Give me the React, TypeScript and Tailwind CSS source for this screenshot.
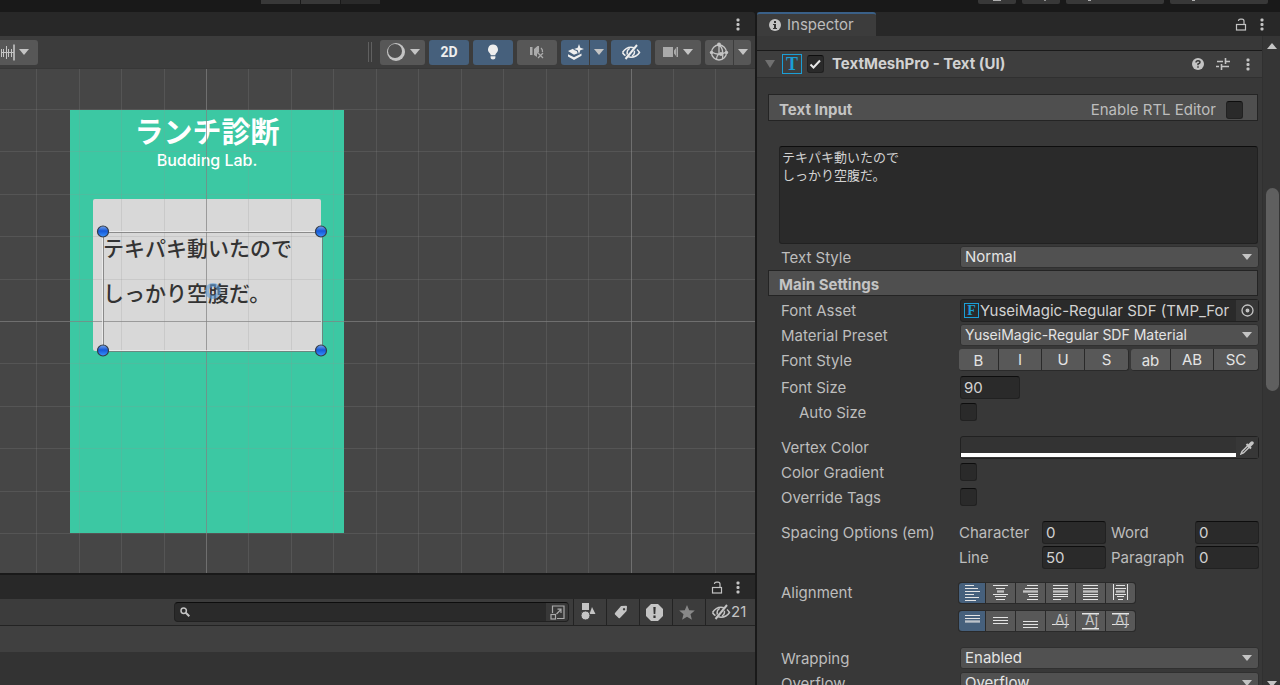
import React from 'react';
import clsx from 'clsx';

const Caret = ({ className = '' }: { className?: string }) => (
  <svg width="10" height="6" viewBox="0 0 10 6" className={clsx('shrink-0 fill-[#c4c4c4]', className)}>
    <path d="M0 0h10L5 6z" />
  </svg>
);

const Kebab = () => (
  <svg width="4" height="13" viewBox="0 0 4 13" fill="#c4c4c4">
    <rect x="0.5" y="0.5" width="3" height="3" rx="1" />
    <rect x="0.5" y="5" width="3" height="3" rx="1" />
    <rect x="0.5" y="9.5" width="3" height="3" rx="1" />
  </svg>
);

const Lock = () => (
  <svg width="12" height="13" viewBox="0 0 12 13" fill="none" stroke="#c4c4c4" strokeWidth="1.2">
    <rect x="1.5" y="6.5" width="9" height="5.5" />
    <path d="M9 6V3.2Q9 1.2 7 1.2H5.5Q3.6 1.2 3.4 3" />
  </svg>
);

const EyeOff = ({ color = '#c4c4c4' }: { color?: string }) => (
  <svg width="20" height="18" viewBox="0 0 20 18" fill="none" stroke={color} strokeWidth="1.5">
    <path d="M1.5 9.5C4 5.5 7 4.2 10 4.2c1 0 2 .2 2.8.5M16 6.5c1 .8 1.8 1.8 2.5 3-2.3 3.5-5.2 4.7-8.5 4.7-1 0-1.8-.1-2.7-.4M4.5 12.7c-1.200-.8-2.200-1.900-3-3.200" />
    <path d="M6.3 11.5C5.800 9 6.600 6.500 8.700 5.400M13.300 7.700c.5 2-.3 4-2.300 5.200" />
    <path d="M4.500 16L16 2" strokeWidth="2" />
  </svg>
);

const ShadingIcon = () => (
  <svg width="20" height="20" viewBox="0 0 20 20">
    <circle cx="10" cy="10" r="9" fill="#c4c4c4" />
    <circle cx="9" cy="9" r="7" fill="#505050" />
  </svg>
);

const BulbIcon = () => (
  <svg width="12" height="17" viewBox="0 0 12 17" fill="#eeeeee">
    <path d="M6 .5a5 5 0 0 0-3.200 8.800c.6.5.9 1.200.9 2h4.600c0-.8.3-1.500.9-2A5 5 0 0 0 6 .5z" />
    <path d="M3.600 12.300h4.800v1.200c0 1.300-1 2-2.400 2s-2.400-.7-2.400-2z" />
  </svg>
);

const MuteIcon = () => (
  <svg width="16" height="14" viewBox="0 0 16 14" fill="#aaaaaa">
    <path d="M1 2h2.500v8H1zM5 4l3.500-3H10v6l-2 2v3L5 10z" />
    <path d="M9 8l5 5M14 8l-5 5M12 3q1.800 1.300 1.500 4" fill="none" stroke="#aaaaaa" strokeWidth="1.3" />
  </svg>
);

const FxIcon = () => (
  <svg width="17" height="17" viewBox="0 0 17 17" fill="#eeeeee">
    <path d="M12 0l1.300 3.700L17 5l-3.700 1.300L12 10l-1.300-3.700L7 5l3.700-1.300z" />
    <path d="M1 7l5-2.300 1 1.200 2.700 1.200 1 2.200L7 10.800z" />
    <path d="M1 10.200l6 3 7.500-3.700v2.200L7 16l-6-3.500z" />
  </svg>
);

const CameraIcon = () => (
  <svg width="16" height="12" viewBox="0 0 16 12" fill="#aaaaaa">
    <path d="M0 1h10v10H0zM11 4.500L13 2v8l-2-2.500zM13.500 1H15v10h-1.500z" />
  </svg>
);

const GizmoIcon = () => (
  <svg width="20" height="20" viewBox="0 0 20 20" fill="none" stroke="#c4c4c4" strokeWidth="1.3">
    <circle cx="10" cy="10.500" r="7.500" />
    <path d="M10 2v9.500M2.500 10q7.500 4.500 15 0M10 11.500Q7.500 14 7.500 17.500M10 3q5 3 3.500 14" />
    <g fill="#c4c4c4" stroke="none">
      <circle cx="10" cy="2.500" r="2" />
      <circle cx="2.500" cy="10.500" r="1.700" />
      <circle cx="17.500" cy="10.500" r="1.700" />
      <circle cx="12" cy="12" r="2" />
    </g>
  </svg>
);

const SnapIcon = () => (
  <svg width="14" height="17" viewBox="0 0 14 17" fill="none" stroke="#c4c4c4">
    <path d="M0 8.500h13M.5 5v8M2.500 5v8M5.500 2v13M7.500 5v8M10.500 5v8" />
    <path d="M13 .5v16" strokeWidth="1.600" />
  </svg>
);

interface ToolButtonProps {
  label: string;
  active?: boolean;
  className?: string;
  children: React.ReactNode;
}

const ToolButton: React.FC<ToolButtonProps> = ({ label, active, className, children }) => (
  <button
    type="button"
    aria-label={label}
    className={clsx(
      'flex h-[25px] items-center justify-center gap-1',
      active ? 'bg-[#46607c] text-[#eeeeee]' : 'bg-[#575757] text-[#c4c4c4]',
      className,
    )}
  >
    {children}
  </button>
);

const TopStrip = () => (
  <header className="flex h-3 shrink-0 items-start bg-[#191919]">
    <div className="ml-[261px] flex gap-px">
      <button type="button" aria-label="Layers" className="h-1 w-[39px] bg-[#383838]" />
      <button type="button" aria-label="Layout" className="h-1 w-[39px] bg-[#383838]" />
      <button type="button" aria-label="Account" className="h-1 w-[39px] bg-[#2a2a2a]" />
    </div>
    <div className="mr-3 ml-auto flex gap-[6px]">
      <button type="button" aria-label="Play" className="flex h-1 w-[38px] justify-center rounded-b-xs bg-[#383838]">
        <span className="h-px w-2 bg-[#b0b0b0]" />
      </button>
      <button type="button" aria-label="Pause" className="flex h-1 w-[38px] justify-center rounded-b-xs bg-[#383838]">
        <span className="ml-2 h-px w-[2px] bg-[#909090]" />
      </button>
      <button type="button" aria-label="Step" className="flex h-1 w-[98px] rounded-b-xs bg-[#383838] pl-[22px]">
        <span className="h-px w-[3px] bg-[#b0b0b0]" />
      </button>
      <button type="button" aria-label="Search" className="flex h-1 w-[98px] rounded-b-xs bg-[#383838] pl-[22px]">
        <span className="h-px w-[3px] bg-[#b0b0b0]" />
      </button>
    </div>
  </header>
);

const SceneToolbar = () => (
  <div className="flex h-[33px] shrink-0 items-center gap-1 border-b border-[#373737] bg-[#3c3c3c] pr-1">
    <ToolButton label="Grid snapping" className="w-[38px] justify-between rounded-r-[3px] pr-2">
      <SnapIcon />
      <Caret />
    </ToolButton>
    <div className="mr-1 ml-auto flex h-5 w-1 border-x border-[#606060]" />
    <ToolButton label="Shading mode" className="w-[45px] rounded-[3px]">
      <ShadingIcon />
      <Caret />
    </ToolButton>
    <ToolButton label="2D" active className="w-10 rounded-[3px] font-['Roboto',sans-serif] text-sm font-bold">
      2D
    </ToolButton>
    <ToolButton label="Lighting" active className="w-10 rounded-[3px]">
      <BulbIcon />
    </ToolButton>
    <ToolButton label="Audio" className="w-10 rounded-[3px]">
      <MuteIcon />
    </ToolButton>
    <div className="flex gap-px">
      <ToolButton label="Effects" active className="w-7 rounded-l-[3px]">
        <FxIcon />
      </ToolButton>
      <ToolButton label="Effects menu" active className="w-[17px] rounded-r-[3px]">
        <Caret />
      </ToolButton>
    </div>
    <ToolButton label="Hidden objects" active className="w-10 rounded-[3px]">
      <EyeOff color="#eeeeee" />
    </ToolButton>
    <ToolButton label="Scene camera" className="w-[46px] rounded-[3px]">
      <CameraIcon />
      <Caret />
    </ToolButton>
    <div className="flex gap-px">
      <ToolButton label="Gizmos" className="w-7 rounded-l-[3px]">
        <GizmoIcon />
      </ToolButton>
      <ToolButton label="Gizmos menu" className="w-[17px] rounded-r-[3px]">
        <Caret />
      </ToolButton>
    </div>
  </div>
);

const GRID_STEP = 42.45;
const GRID_X = 206.5;
const GRID_Y = 252.5;
const HANDLES = [
  [103, 162.5],
  [321, 162.5],
  [103, 281.5],
  [321, 281.5],
];

const gridLines = (origin: number, from: number, to: number) =>
  Array.from({ length: to - from + 1 }, (_, i) => ({
    at: Math.floor(origin + (from + i) * GRID_STEP) + 0.5,
    major: (from + i) % 10 === 0,
  }));

const SceneOverlay = () => (
  <svg className="absolute inset-0 h-full w-full">
    <defs>
      <linearGradient id="handle" x1="0" y1="0" x2="0" y2="1">
        <stop offset="0" stopColor="#7aa6ea" />
        <stop offset="0.45" stopColor="#1558d8" />
        <stop offset="1" stopColor="#3b94ff" />
      </linearGradient>
    </defs>
    {gridLines(GRID_X, -4, 40).map(({ at, major }) => (
      <line key={at} x1={at} x2={at} y1="0" y2="100%" stroke={major ? '#808080' : '#8f8f8f'} strokeOpacity={major ? 0.7 : 0.2} />
    ))}
    {gridLines(GRID_Y, -5, 20).map(({ at, major }) => (
      <line key={at} y1={at} y2={at} x1="0" x2="100%" stroke={major ? '#808080' : '#8f8f8f'} strokeOpacity={major ? 0.7 : 0.2} />
    ))}
    <rect x="102.500" y="162.500" width="219" height="119" fill="none" stroke="#f4f4f4" strokeOpacity="0.7" />
    <rect x="103.500" y="163.500" width="219" height="119" fill="none" stroke="#777777" strokeOpacity="0.8" />
    {HANDLES.map(([x, y]) => (
      <circle key={`${x}-${y}`} cx={x} cy={y} r="5.500" fill="url(#handle)" stroke="#343c48" strokeWidth="1.200" />
    ))}
    <circle cx="213" cy="222" r="6" fill="none" stroke="#5f9bd6" strokeOpacity="0.6" strokeWidth="4" />
  </svg>
);

const SceneView = () => (
  <div className="relative min-h-0 flex-1 overflow-hidden bg-[#464646]">
    <div className="absolute top-[41px] left-[70px] h-[423px] w-[274px] bg-[#3cc8a3] font-['Noto_Sans_CJK_JP',sans-serif]">
      <h1 className="text-center text-[29px] leading-10 font-bold text-white">ランチ診断</h1>
      <p className="text-center font-['Inter',sans-serif] text-base leading-5 font-medium text-white">Budding Lab.</p>
      <div className="mx-[23px] mt-[29px] h-[152px] rounded-[2px] bg-[#d8d8d8] pt-[26px] pl-[10px] text-[21px] leading-[45px] font-medium text-[#333333]">
        テキパキ動いたので
        <br />
        しっかり空腹だ。
      </div>
    </div>
    <SceneOverlay />
  </div>
);

const projectFilters = [
  {
    label: 'Filter by type',
    icon: (
      <svg width="16" height="18" viewBox="0 0 16 18" fill="#c4c4c4">
        <path d="M2 0h7v7H2zM12 4l3.500 7H9.500z" />
        <circle cx="5.500" cy="12.500" r="4.500" stroke="#3c3c3c" />
      </svg>
    ),
  },
  {
    label: 'Filter by label',
    icon: (
      <svg width="14" height="14" viewBox="0 0 14 14" fill="#c4c4c4">
        <path fillRule="evenodd" d="M7 1l5-.3q1 0 1 1L12.600 6 6 13q-.7.500-1.400 0L1 9.400q-.5-.7 0-1.400zM10 3a1.200 1.200 0 1 0 .1 0z" />
      </svg>
    ),
  },
  {
    label: 'Filter by import log',
    icon: (
      <svg width="17" height="17" viewBox="0 0 17 17">
        <path d="M5 0h7l5 5v7l-5 5H5l-5-5V5z" fill="#c4c4c4" />
        <path d="M7.300 3h2.400l-.4 7H7.700zM7.400 11.500h2.200V14H7.400z" fill="#333333" />
      </svg>
    ),
  },
  {
    label: 'Favorites',
    icon: (
      <svg width="16" height="15" viewBox="0 0 16 15" fill="#888888">
        <path d="M8 0l2.200 5.200 5.600.4-4.300 3.600 1.400 5.500L8 11.700l-4.900 3 1.400-5.500L.2 5.600l5.600-.4z" />
      </svg>
    ),
  },
];

const ProjectPanel = () => (
  <section className="flex h-[112px] shrink-0 flex-col border-t-2 border-[#191919] bg-[#333333]">
    <div className="flex h-6 items-center justify-end gap-[13px] bg-[#282828] pr-[15px]">
      <button type="button" aria-label="Lock">
        <Lock />
      </button>
      <button type="button" aria-label="Menu">
        <Kebab />
      </button>
    </div>
    <div className="flex h-[27px] border-b border-[#232323] bg-[#3c3c3c]">
      <label className="my-[3px] ml-[174px] flex flex-1 items-center rounded-[4px] border border-[#212121] border-t-[#0d0d0d] bg-[#2a2a2a] pl-[5px]">
        <svg width="10" height="10" viewBox="0 0 10 10" fill="none" stroke="#c4c4c4" strokeWidth="1.500">
          <circle cx="3.700" cy="3.700" r="2.700" />
          <path d="M5.500 5.500L9.300 9.300" strokeWidth="2" />
        </svg>
        <input type="text" aria-label="Search" className="ml-1 h-4 min-w-0 flex-1 bg-transparent text-sm text-[#d2d2d2] outline-none" />
        <button type="button" aria-label="Open search" className="flex h-full w-[22px] items-center justify-center rounded-r-[3px] bg-[#383838]">
          <svg width="15" height="15" viewBox="0 0 15 15" fill="none" stroke="#aaaaaa" strokeWidth="1.200">
            <path d="M2.500 8V1h11.500v12.500H7" />
            <rect x="1" y="9.500" width="4.500" height="4.500" />
            <path d="M6.500 9L11 4.500M7.500 4.200H11V8" />
          </svg>
        </button>
      </label>
      <div className="ml-1 flex">
        {projectFilters.map(({ label, icon }) => (
          <button
            key={label}
            type="button"
            aria-label={label}
            className="flex w-[33px] items-center justify-center border-l border-[#232323] pr-1"
          >
            {icon}
          </button>
        ))}
        <button type="button" className="flex w-[50px] items-center border-l border-[#232323] pl-[5px] text-[15px] text-[#c4c4c4]">
          <EyeOff />
          21
        </button>
      </div>
    </div>
    <div className="h-[26px] bg-[#404040]" />
  </section>
);

const Check: React.FC<{ id: string; label?: string; defaultChecked?: boolean }> = ({ id, label, defaultChecked }) => (
  <span className="relative inline-flex h-[18px] w-[17px] shrink-0">
    <input
      id={id}
      type="checkbox"
      aria-label={label}
      defaultChecked={defaultChecked}
      className="peer h-full w-full appearance-none rounded-[3px] border border-[#212121] border-t-[#0d0d0d] bg-[#2a2a2a]"
    />
    <svg
      viewBox="0 0 17 18"
      className="pointer-events-none absolute inset-0 hidden fill-none stroke-[#e8e8e8] stroke-2 peer-checked:block"
    >
      <path d="M3.500 9.500l3 3 6.500-7" />
    </svg>
  </span>
);

interface RowProps {
  label: string;
  htmlFor?: string;
  indent?: boolean;
  className?: string;
  children: React.ReactNode;
}

const Row: React.FC<RowProps> = ({ label, htmlFor, indent, className, children }) => (
  <div className={clsx('flex h-[25px] items-center pr-[3px] pl-6', className)}>
    {htmlFor ? (
      <label htmlFor={htmlFor} className={clsx('w-[178px] shrink-0', indent && 'pl-[18px]')}>
        {label}
      </label>
    ) : (
      <span className="w-[178px] shrink-0">{label}</span>
    )}
    {children}
  </div>
);

const Dropdown: React.FC<{ id: string; value: string; small?: boolean }> = ({ id, value, small }) => (
  <span className="relative ml-px flex flex-1 pb-px">
    <select
      id={id}
      className={clsx(
        'h-[22px] w-full appearance-none rounded-[3px] border border-[#303030] bg-[#515151] pb-px pl-1 text-[#e4e4e4]',
        small && 'text-sm',
      )}
    >
      <option>{value}</option>
    </select>
    <Caret className="pointer-events-none absolute top-2 right-[7px]" />
  </span>
);

const NumberField: React.FC<{ id: string; value: string; className: string }> = ({ id, value, className }) => (
  <input
    id={id}
    type="text"
    defaultValue={value}
    className={clsx(
      'h-[23px] rounded-[3px] border border-[#212121] border-t-[#0d0d0d] bg-[#2a2a2a] pl-[3px] text-[#d2d2d2] outline-none',
      className,
    )}
  />
);

const styleButtons = [
  { text: 'B', className: 'w-10 rounded-l-[3px] pt-[3px]' },
  { text: 'I', className: 'w-[43px]' },
  { text: 'U', className: 'w-[43px]' },
  { text: 'S', className: 'mr-[2px] w-[44px] rounded-r-[3px]' },
  { text: 'ab', className: 'w-10 rounded-l-[3px] pt-[3px]' },
  { text: 'AB', className: 'w-[43px]' },
  { text: 'SC', className: 'flex-1 rounded-r-[3px]' },
];

const horizontalIcons = [
  { label: 'Left', d: 'M1 1.500h9M1 4.500h13M1 7.500h15M1 10.500h9M1 13.500h14M1 16.500h11' },
  { label: 'Center', d: 'M1 1.500h15M4 4.500h9M5 7h7M5 8h7M1 10.500h15M3 12.500h11M4 15.500h9' },
  { label: 'Right', d: 'M5 1.500h11M3 4.500h13M1 7h15M1 8h15M6 10.500h10M7 12.500h9M5 15.500h11' },
  { label: 'Justified', d: 'M1 1.500h15M1 4.500h15M1 7h15M1 8h15M1 10.500h15M1 12.500h15M1 15.500h8' },
  { label: 'Flush', d: 'M1 1.500h15M1 4.500h15M1 7h15M1 8h15M1 10.500h15M1 12.500h15M1 15.500h15' },
  { label: 'Geometry center', d: 'M1.500 0v16M15.500 0v16M4 1.500h9M3 4.500h11M4 7h9M4 8h9M3 10.500h11M5 12.500h7M6 15.500h5' },
];

const verticalIcons = [
  { label: 'Top', d: 'M1 3.500h15M1 6.500h15M1 9h15M1 10h15' },
  { label: 'Middle', d: 'M1 5.500h15M1 8.500h15M1 11.500h15' },
  { label: 'Bottom', d: 'M1 9.500h15M1 12.500h15M1 15.500h15' },
  { label: 'Baseline', text: true, d: 'M0 12.500h17' },
  { label: 'Midline', text: true, d: 'M0 1.500h17M0 2h17M0 16.500h17M0 17h17' },
  { label: 'Capline', text: true, d: 'M0 1.500h17M0 2h17M0 12.500h17' },
];

const AlignGroup: React.FC<{ items: { label: string; d: string; text?: boolean }[] }> = ({ items }) => (
  <div className="-ml-px flex gap-px rounded-[3px] border border-[#2a2a2a] bg-[#2a2a2a]">
    {items.map(({ label, d, text }, index) => (
      <button
        key={label}
        type="button"
        aria-label={label}
        className={clsx(
          'flex h-5 items-center justify-center first:rounded-l-[3px] last:rounded-r-[3px]',
          index === 0 ? 'w-[26px] bg-[#46607c]' : 'w-[29px] bg-[#585858]',
        )}
      >
        <svg width="17" height="18" viewBox="0 0 17 18" fill="none" stroke="#e4e4e4">
          <path d={d} />
          {text && (
            <text x="3" y="13" fill="#c4c4c4" stroke="none" className="font-['Inter'] text-sm">
              Aj
            </text>
          )}
        </svg>
      </button>
    ))}
  </div>
);

const SectionHeader: React.FC<{ title: string; className?: string; children?: React.ReactNode }> = ({
  title,
  className,
  children,
}) => (
  <div
    className={clsx(
      'mr-1 ml-[11px] flex items-center border border-[#242424] bg-[#4f4f4f] pt-1 pl-[10px]',
      className,
    )}
  >
    <h2 className="font-bold text-[#c4c4c4]">{title}</h2>
    {children}
  </div>
);

const Inspector = () => (
  <aside className="flex w-[523px] shrink-0 flex-col bg-[#383838]">
    <div className="flex h-6 shrink-0 items-center bg-[#282828] pr-4">
      <div className="flex h-full w-[119px] items-center gap-[6px] rounded-t-[3px] border-t-2 border-[#3a6088] bg-[#3c3c3c] pl-3">
        <svg width="12" height="12" viewBox="0 0 12 12">
          <circle cx="6" cy="6" r="6" fill="#c4c4c4" />
          <path d="M5 2h2v2H5zM4 5h3v4h1v1H4V9h1V6H4z" fill="#333333" />
        </svg>
        <span>Inspector</span>
      </div>
      <button type="button" aria-label="Lock" className="ml-auto">
        <Lock />
      </button>
      <button type="button" aria-label="Menu" className="ml-[13px]">
        <Kebab />
      </button>
    </div>

    <div className="flex min-h-0 flex-1 overflow-hidden">
      <div className="min-w-0 flex-1">
        <div className="mt-[14px] flex h-7 items-center border-y border-t-[#1a1a1a] border-b-[#303030] bg-[#3e3e3e] pr-3 pl-2">
          <svg width="10" height="8" viewBox="0 0 10 8" fill="#707070">
            <path d="M0 0h10L5 8z" />
          </svg>
          <span className="mr-[5px] ml-[7px] flex h-5 w-5 items-center justify-center border border-[#1b9fd6] font-['Liberation_Serif',serif] text-lg leading-none font-bold text-[#1b9fd6]">
            T
          </span>
          <Check id="component-enabled" defaultChecked />
          <label htmlFor="component-enabled" className="ml-2 font-bold text-[#d2d2d2]">
            TextMeshPro - Text (UI)
          </label>
          <button type="button" aria-label="Help" className="ml-auto">
            <svg width="12" height="12" viewBox="0 0 12 12">
              <circle cx="6" cy="6" r="6" fill="#c4c4c4" />
              <path d="M4 4.500Q4 2.700 6 2.700t2 1.600Q8 5.400 6 6v1.200M6 8.200v1.600" fill="none" stroke="#383838" strokeWidth="1.500" />
            </svg>
          </button>
          <button type="button" aria-label="Presets" className="mx-3">
            <svg width="14" height="12" viewBox="0 0 14 12" fill="none" stroke="#c4c4c4" strokeWidth="1.600">
              <path d="M1 3.500h6M9.500 3.500H14M9.500 0v6M0 8.500h3M5.500 8.500H13M5.500 6v6" />
            </svg>
          </button>
          <button type="button" aria-label="Component menu" className="ml-1">
            <Kebab />
          </button>
        </div>

        <SectionHeader title="Text Input" className="mt-4 h-[27px]">
          <label htmlFor="rtl" className="ml-auto">
            Enable RTL Editor
          </label>
          <span className="mr-[14px] ml-[10px] flex">
            <Check id="rtl" />
          </span>
        </SectionHeader>

        <div className="pr-1 pl-[22px]">
          <textarea
            aria-label="Text"
            defaultValue={'テキパキ動いたので\nしっかり空腹だ。'}
            className="mt-[25px] block h-[98px] w-full resize-none rounded-[3px] border border-[#212121] border-t-[#0d0d0d] bg-[#2a2a2a] px-[2px] py-px font-['Noto_Sans_CJK_JP',sans-serif] text-[13px] leading-[18px] text-[#d2d2d2] outline-none"
          />
        </div>
        <Row label="Text Style" htmlFor="text-style" className="mt-px">
          <Dropdown id="text-style" value="Normal" />
        </Row>

        <SectionHeader title="Main Settings" className="h-[26px]" />

        <Row label="Font Asset" className="mt-[2px]">
          <div className="ml-px flex h-[23px] min-w-0 flex-1 items-center rounded-[3px] border border-[#212121] bg-[#2a2a2a] pl-[3px] text-[#d2d2d2]">
            <span className="flex h-[15px] w-[15px] shrink-0 items-center justify-center border border-[#1b9fd6] font-['Liberation_Serif',serif] text-sm leading-none font-bold text-[#1b9fd6]">
              F
            </span>
            <span className="ml-px min-w-0 flex-1 overflow-hidden whitespace-nowrap">YuseiMagic-Regular SDF (TMP_For</span>
            <button type="button" aria-label="Select font asset" className="flex h-full w-[22px] items-center justify-center bg-[#373737]">
              <svg width="13" height="13" viewBox="0 0 13 13" fill="none" stroke="#c4c4c4" strokeWidth="1.300">
                <circle cx="6.500" cy="6.500" r="5.500" />
                <circle cx="6.500" cy="6.500" r="1.300" fill="#c4c4c4" />
              </svg>
            </button>
          </div>
        </Row>
        <Row label="Material Preset" htmlFor="material">
          <Dropdown id="material" value="YuseiMagic-Regular SDF Material" small />
        </Row>
        <Row label="Font Style">
          <div className="flex flex-1 pb-px">
            {styleButtons.map(({ text, className }) => (
              <button
                key={text}
                type="button"
                className={clsx('h-[22px] border-r border-b border-[#2a2a2a] bg-[#585858] leading-[18px] text-[#e4e4e4]', className)}
              >
                {text}
              </button>
            ))}
          </div>
        </Row>
        <Row label="Font Size" htmlFor="font-size" className="mt-[2px]">
          <NumberField id="font-size" value="90" className="ml-px w-[60px]" />
        </Row>
        <Row label="Auto Size" htmlFor="auto-size" indent>
          <span className="ml-px flex pb-px">
            <Check id="auto-size" />
          </span>
        </Row>

        <Row label="Vertex Color" className="mt-[10px]">
          <div className="ml-px flex h-[23px] flex-1 rounded-[3px] border border-[#212121] bg-[#333333]">
            <button type="button" aria-label="Vertex color" className="flex flex-1 items-end pb-px">
              <span className="h-1 w-full bg-white" />
            </button>
            <button type="button" aria-label="Pick color" className="flex w-[22px] items-center justify-center bg-[#373737]">
              <svg width="14" height="14" viewBox="0 0 14 14" fill="none" stroke="#c4c4c4">
                <path d="M7.500 5L2 10.500 1 13l2.500-1L9 6.500" strokeWidth="1.400" />
                <path d="M6.500 3l4.500 4.500" strokeWidth="2" />
                <path d="M9 5l3-3" strokeWidth="3.500" strokeLinecap="round" />
              </svg>
            </button>
          </div>
        </Row>
        <Row label="Color Gradient" htmlFor="gradient">
          <span className="ml-px flex pb-px">
            <Check id="gradient" />
          </span>
        </Row>
        <Row label="Override Tags" htmlFor="override-tags">
          <span className="ml-px flex pb-px">
            <Check id="override-tags" />
          </span>
        </Row>

        <Row label="Spacing Options (em)" className="mt-[10px]">
          <label htmlFor="character" className="w-[83px]">Character</label>
          <NumberField id="character" value="0" className="w-16" />
          <label htmlFor="word" className="ml-[5px] flex-1">Word</label>
          <NumberField id="word" value="0" className="w-16" />
        </Row>
        <Row label="">
          <label htmlFor="line" className="w-[83px]">Line</label>
          <NumberField id="line" value="50" className="w-16" />
          <label htmlFor="paragraph" className="ml-[5px] flex-1">Paragraph</label>
          <NumberField id="paragraph" value="0" className="w-16" />
        </Row>

        <Row label="Alignment" className="mt-[10px]">
          <AlignGroup items={horizontalIcons} />
        </Row>
        <Row label="" className="mt-[3px]">
          <AlignGroup items={verticalIcons} />
        </Row>

        <Row label="Wrapping" htmlFor="wrapping" className="mt-[13px]">
          <Dropdown id="wrapping" value="Enabled" />
        </Row>
        <Row label="Overflow" htmlFor="overflow">
          <Dropdown id="overflow" value="Overflow" />
        </Row>
      </div>

      <div className="flex w-[18px] shrink-0 flex-col items-center border-l border-[#303030] bg-[#353535] pt-[7px]">
        <Caret className="rotate-180" />
        <div className="mt-[139px] ml-[2px] h-[203px] w-[13px] rounded-full bg-[#5f5f5f]" />
        <Caret className="mt-auto -mb-[2px]" />
      </div>
    </div>
  </aside>
);

export default function App() {
  return (
    <div className="flex h-screen flex-col overflow-hidden bg-[#191919] font-['Inter','Noto_Sans_CJK_JP',sans-serif] text-[15px] leading-5 text-[#bdbdbd]">
      <TopStrip />
      <div className="flex min-h-0 flex-1 gap-[2px]">
        <main className="flex min-w-0 flex-1 flex-col">
          <div className="flex h-6 shrink-0 items-center justify-end rounded-tr-[3px] bg-[#282828] pr-[15px]">
            <button type="button" aria-label="Menu">
              <Kebab />
            </button>
          </div>
          <SceneToolbar />
          <SceneView />
          <ProjectPanel />
        </main>
        <Inspector />
      </div>
    </div>
  );
}
